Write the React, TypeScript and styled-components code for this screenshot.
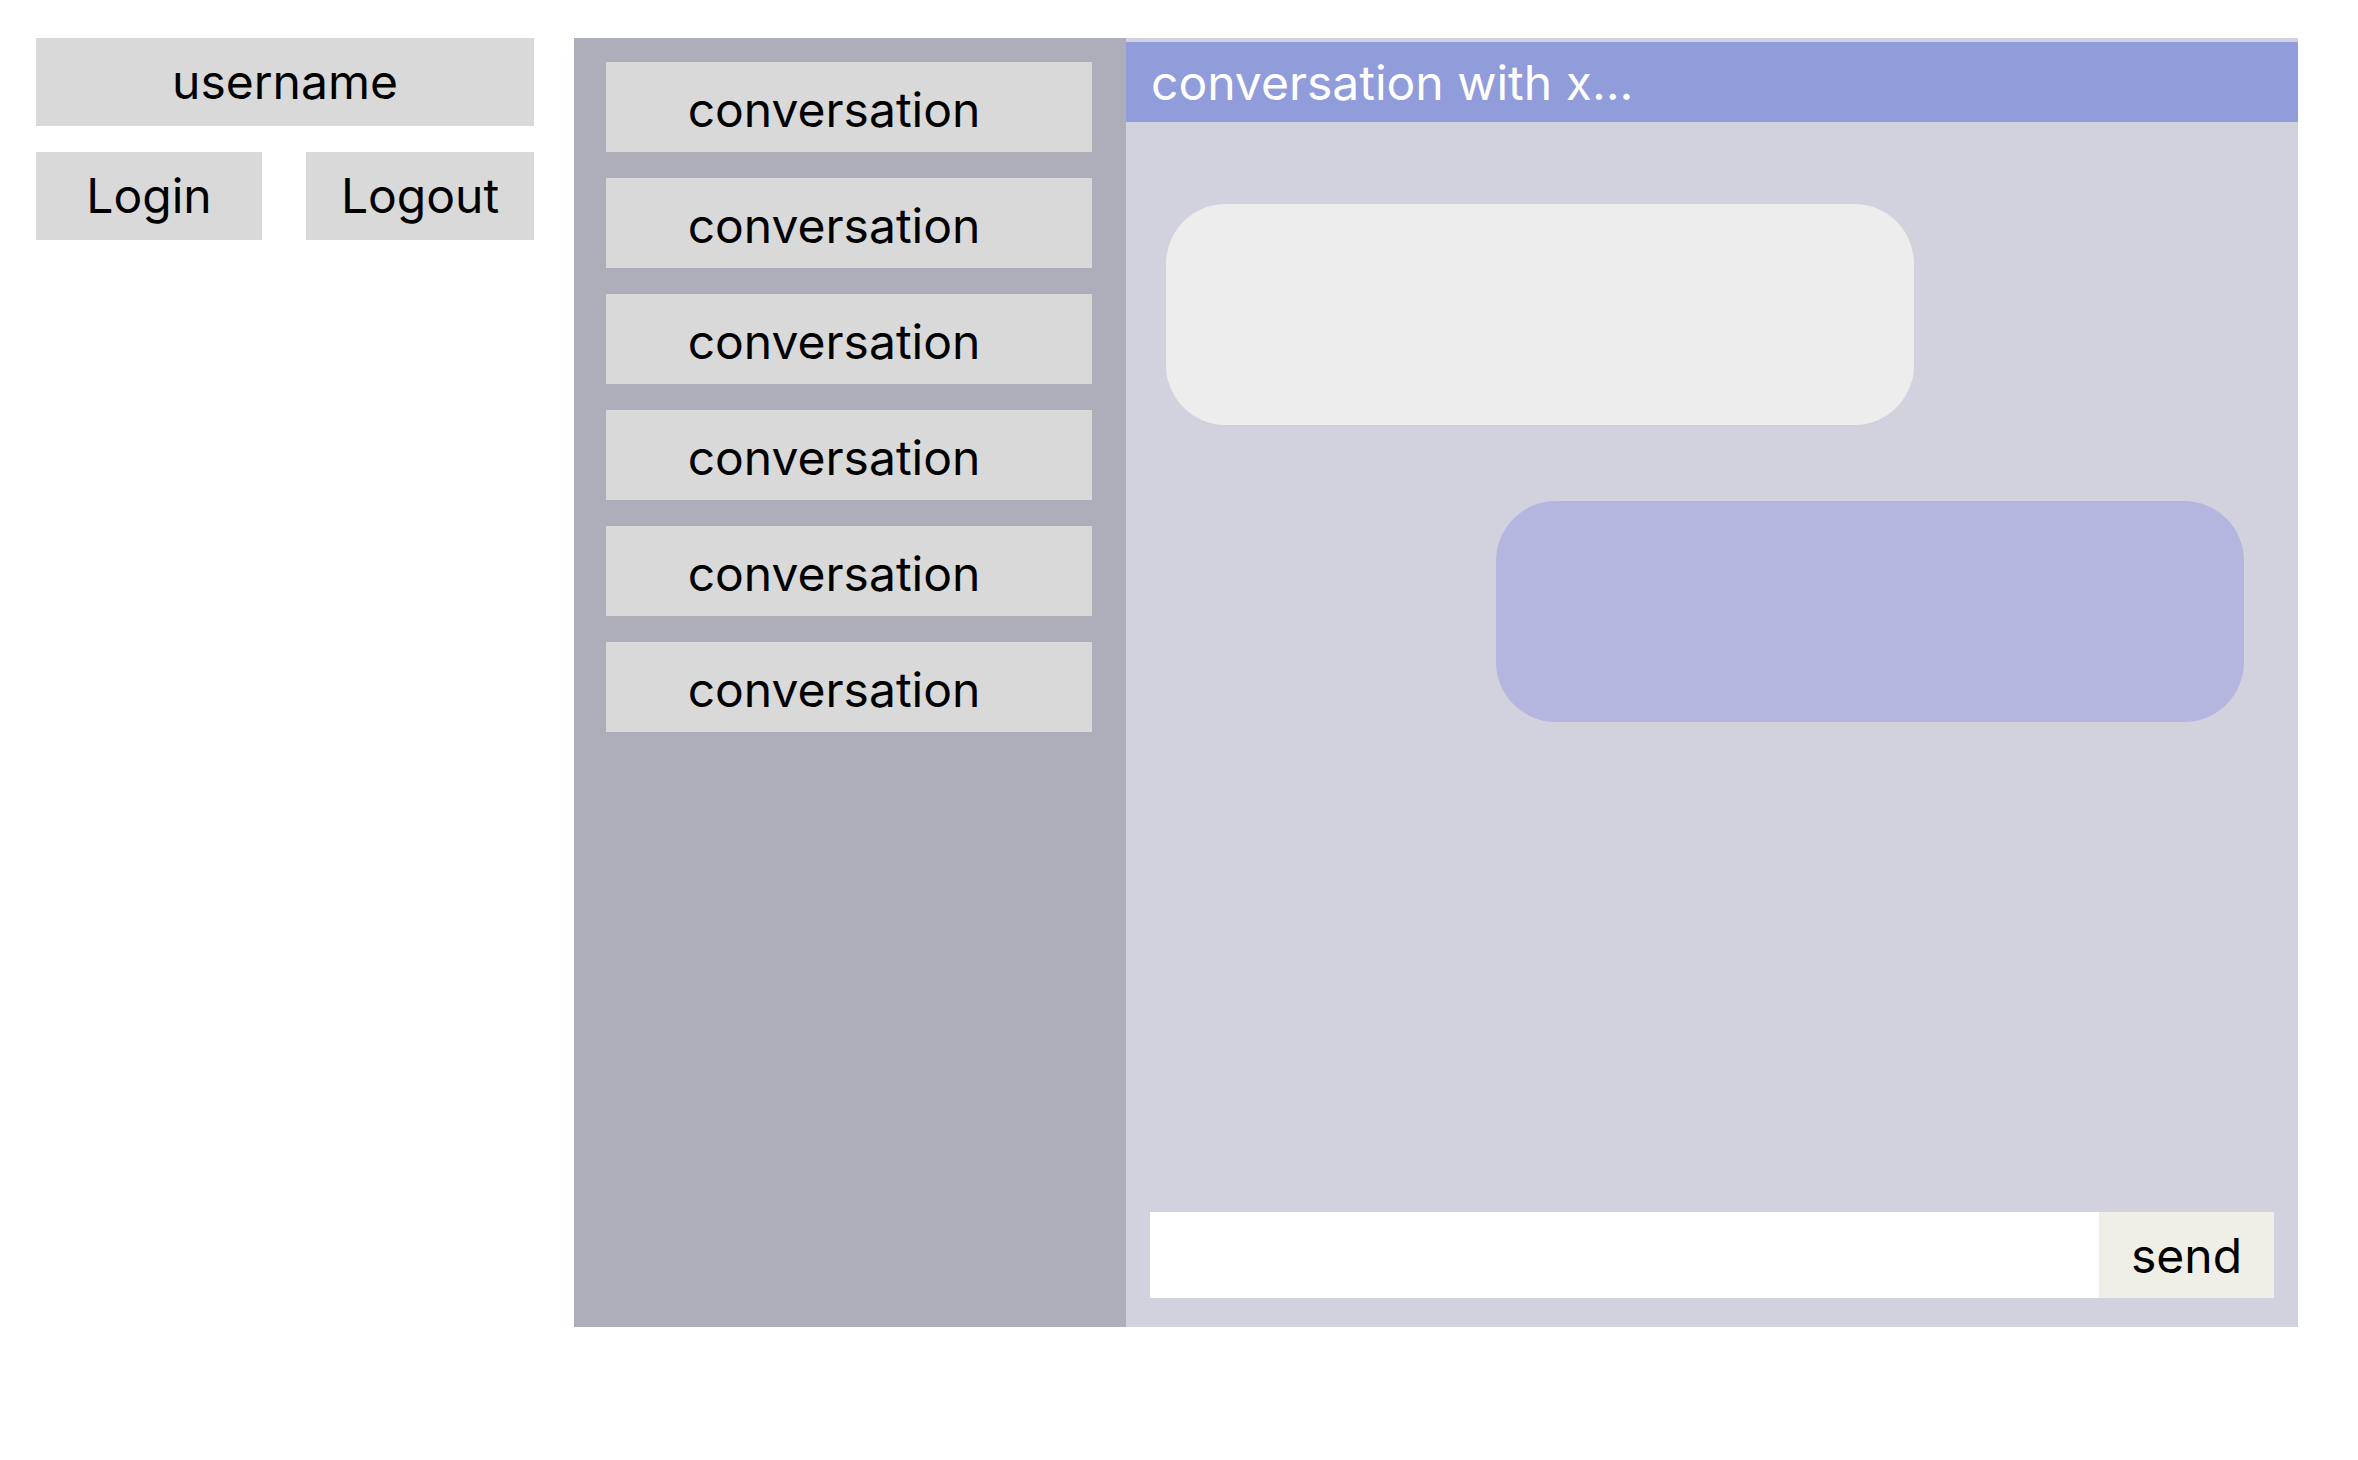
import React from "react";
import styled, { createGlobalStyle } from "styled-components";

const GlobalStyle = createGlobalStyle`
  html, body {
    margin: 0;
    padding: 0;
    background: #ffffff;
  }
  body {
    font-family: Inter, "Noto Sans", "Liberation Sans", sans-serif;
    color: #000000;
  }
`;

const Page = styled.div`
  display: flex;
  align-items: flex-start;
  gap: 40px;
  padding: 38px 0 0 36px;
`;

const Account = styled.div`
  width: 498px;
  display: flex;
  flex-direction: column;
  gap: 26px;
`;

const Tile = styled.div<{ $w?: number }>`
  display: flex;
  align-items: center;
  justify-content: center;
  height: 88px;
  width: ${(p) => (p.$w ? `${p.$w}px` : "auto")};
  background: #d9d9d9;
  font-size: 48px;
  line-height: 1;
  box-sizing: border-box;
`;

const ButtonRow = styled.div`
  display: flex;
  justify-content: space-between;
`;

const Workspace = styled.div`
  display: flex;
  height: 1289px;
`;

const Sidebar = styled.div`
  width: 552px;
  box-sizing: border-box;
  background: #aeaeba;
  padding: 24px 34px 0 32px;
  display: flex;
  flex-direction: column;
  gap: 26px;
`;

const ConvItem = styled.div`
  height: 90px;
  box-sizing: border-box;
  background: #d9d9d9;
  display: flex;
  align-items: center;
  justify-content: center;
  padding: 5px 30px 0 0;
  font-size: 48px;
  line-height: 1;
`;

const Chat = styled.div`
  width: 1172px;
  background: #d2d2de;
  padding-top: 4px;
  box-sizing: border-box;
  display: flex;
  flex-direction: column;
`;

const ChatHeader = styled.div`
  height: 80px;
  background: #919cdb;
  color: #ffffff;
  font-size: 48px;
  display: flex;
  align-items: center;
  padding-left: 25px;
`;

const Messages = styled.div`
  flex: 1;
  display: flex;
  flex-direction: column;
  gap: 76px;
  padding: 82px 54px 0 40px;
`;

const Bubble = styled.div<{ $mine?: boolean }>`
  width: 748px;
  height: 221px;
  border-radius: 60px;
  background: ${(p) => (p.$mine ? "#b5b6e0" : "#ededed")};
  align-self: ${(p) => (p.$mine ? "flex-end" : "flex-start")};
`;

const Composer = styled.div`
  display: flex;
  height: 86px;
  margin: 0 24px 29px 24px;
`;

const Input = styled.input`
  flex: 1;
  border: none;
  outline: none;
  background: #ffffff;
  font-family: inherit;
  font-size: 40px;
  padding: 0 16px;
  margin: 0;
`;

const SendButton = styled.button`
  width: 175px;
  border: none;
  margin: 0;
  padding: 0;
  background: #efefe8;
  font-family: inherit;
  font-size: 48px;
  color: #000000;
  cursor: pointer;
`;

export default function App() {
  const conversations = Array.from({ length: 6 }, () => "conversation");
  return (
    <>
      <GlobalStyle />
      <Page>
        <Account>
          <Tile>username</Tile>
          <ButtonRow>
            <Tile $w={226}>Login</Tile>
            <Tile $w={228}>Logout</Tile>
          </ButtonRow>
        </Account>
        <Workspace>
          <Sidebar>
            {conversations.map((c, i) => (
              <ConvItem key={i}>{c}</ConvItem>
            ))}
          </Sidebar>
          <Chat>
            <ChatHeader>conversation with x...</ChatHeader>
            <Messages>
              <Bubble />
              <Bubble $mine />
            </Messages>
            <Composer>
              <Input type="text" />
              <SendButton>send</SendButton>
            </Composer>
          </Chat>
        </Workspace>
      </Page>
    </>
  );
}
